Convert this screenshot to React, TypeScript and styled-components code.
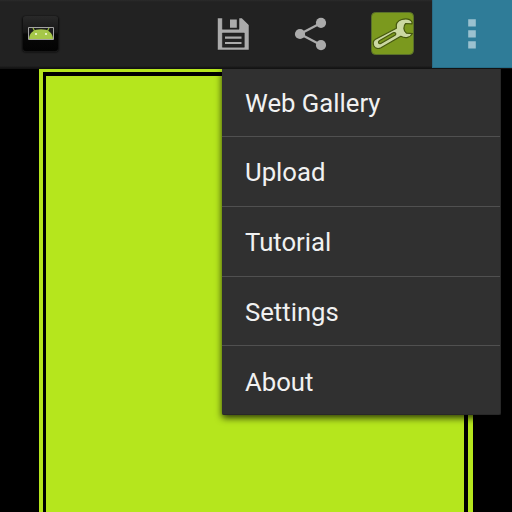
import React from 'react';
import styled, { createGlobalStyle } from 'styled-components';

const GlobalStyle = createGlobalStyle`
  body { margin: 0; background: #000; overflow: hidden; }
  *, *::before, *::after { box-sizing: border-box; }
`;

const Screen = styled.div`
  position: relative;
  display: flex;
  flex-direction: column;
  width: 512px;
  height: 512px;
  overflow: hidden;
  background: #000;
  font-family: Roboto, 'Liberation Sans', sans-serif;
`;

const ActionBar = styled.header`
  display: flex;
  flex: none;
  height: 69px;
  background: linear-gradient(#2b2b2b 0, #222 2px, #222 66px, #191919 67px, #111 69px);
`;

const HomeButton = styled.div`
  display: flex;
  width: 80px;
  padding: 14px 0 0 20px;
`;

const Actions = styled.nav`
  display: flex;
  margin-left: auto;
`;

const ActionButton = styled.button<{ $width: number; $active?: boolean }>`
  display: flex;
  align-items: center;
  justify-content: center;
  width: ${(p) => p.$width}px;
  height: ${(p) => (p.$active ? 68 : 67)}px;
  padding: ${(p) => (p.$active ? '0 2px 0 0' : '0')};
  border: 0;
  border-left: ${(p) => (p.$active ? '1px solid #2a6c86' : '0')};
  border-bottom: ${(p) => (p.$active ? '1px solid #256e89' : '0')};
  background: ${(p) => (p.$active ? '#2f7c98' : 'transparent')};
`;

const ToolsButton = styled(ActionButton)`
  margin-left: 3px;
`;

const Icon = styled.svg`
  display: block;
  flex: none;
  overflow: visible;
`;

const Canvas = styled.main`
  flex: 1;
  width: 434px;
  margin-left: 39px;
  padding: 3px 5px 0 4px;
  background: #b5e61d;
`;

const Frame = styled.div`
  height: 100%;
  border: solid #000;
  border-width: 4px 4px 0 3px;
  background: #b5e61d;
`;

const Menu = styled.ul`
  position: absolute;
  top: 69px;
  right: 11px;
  width: 279px;
  height: 346px;
  margin: 0;
  padding: 0;
  list-style: none;
  background: #303030;
  border: 0 solid #282828;
  border-width: 0 1px 1px 0;
  border-radius: 0 0 2px 2px;
  box-shadow: 0 3px 7px rgba(0, 0, 0, 0.75);
  clip-path: inset(0 -16px -20px -16px);
`;

const MenuItem = styled.li`
  display: flex;
  align-items: center;
  height: 69.75px;
  padding: 2px 23px 0;
  border-bottom: 1px solid #505050;
  color: #f1f1f1;
  font-size: 25.7px;
  line-height: 30px;
  white-space: nowrap;

  &:first-child { height: 68px; padding-top: 0; }
  &:last-child { border-bottom: 0; }
`;

function AppIcon() {
  return (
    <Icon width="40" height="40" viewBox="20 14 40 40">
      <defs>
        <linearGradient id="tile" x1="0" y1="0" x2="0" y2="1">
          <stop offset="0" stopColor="#292929" />
          <stop offset=".46" stopColor="#171717" />
          <stop offset=".52" stopColor="#080808" />
          <stop offset="1" stopColor="#030303" />
        </linearGradient>
        <filter id="tileShadow" x="-20%" y="-20%" width="140%" height="140%">
          <feGaussianBlur stdDeviation="1" />
        </filter>
      </defs>
      <rect x="22.5" y="16.5" width="36" height="35.5" rx="3" fill="#0b0b0b" filter="url(#tileShadow)" />
      <rect x="23" y="16" width="35" height="35" rx="3" fill="url(#tile)" />
      <path d="M28.5 39.5v-12h25v12z" fill="#1d1d1d" stroke="#a3a3a3" />
      <path d="M29 39C29.3 32.5 34 29.3 41 29.3s11.7 3.2 12 9.7z" fill="#a5c749" />
      <path d="m33 28 1.7 3.2m14.3-3.2-1.7 3.2" stroke="#9abe3d" strokeWidth="1.2" />
      <circle cx="36" cy="34" r="1.1" fill="#eff5d8" />
      <circle cx="46" cy="34" r="1.1" fill="#eff5d8" />
    </Icon>
  );
}

function SaveIcon() {
  return (
    <Icon width="34" height="34" viewBox="216 17 34 34">
      <path
        fillRule="evenodd"
        d="M217.5 18H222.4V29.2H239V18H241.8L249 25V50H217.5ZM222.4 33V47.2H244.3V33Z"
        fill="#ababab"
        stroke="#181818"
        strokeWidth=".5"
      />
      <path d="M230 19.5h6.8v8.2H230zM225 36.6h16.5v2.1H225zM225 42h16.5v2.1H225z" fill="#ababab" />
    </Icon>
  );
}

function ShareIcon() {
  return (
    <Icon width="34" height="36" viewBox="294 15.5 34 36">
      <path d="M321 22.5 300 33.5l21 11" fill="none" stroke="#ababab" strokeWidth="2.3" />
      <g fill="#ababab">
        <circle cx="300" cy="33.5" r="5.1" />
        <circle cx="321" cy="22.3" r="5.1" />
        <circle cx="321" cy="44.6" r="5.1" />
      </g>
    </Icon>
  );
}

function WrenchIcon() {
  return (
    <Icon width="43" height="43" viewBox="371 12 43 43">
      <rect x="371.5" y="12.5" width="42" height="42" rx="4" fill="#7b991e" stroke="#59702a" />
      <path
        d="M412 22C410 18.8 406 18.3 401.7 19.5C397.3 21 395.6 24.5 396.4 28.2L375.5 39.3C373 40.8 372.8 43.5 373.9 46C375.4 48.9 378.5 49 381 47.7L400.8 36.3C405.5 38.7 410.5 37.7 412.4 33.6L406.5 33.2C403.3 31 403 26.2 405.7 23.5L412 23.8Z"
        fill="#cbd8a2"
        stroke="#46580f"
        strokeWidth="1.2"
        strokeLinejoin="round"
      />
      <path
        d="M379.3 40.7 393.2 32.8C395.2 31.9 396.8 34 395 35.3L380.8 43.5C378.8 44.4 377.6 42 379.3 40.7Z"
        fill="#7b991e"
        stroke="#46580f"
        strokeWidth="1.2"
      />
    </Icon>
  );
}

function OverflowIcon() {
  return (
    <Icon width="8" height="30" viewBox="0 0 8 30">
      <path d="M.2.3h7.6v7.2H.2zM.2 11.2h7.6v7.2H.2zM.2 22.2h7.6v7.2H.2z" fill="#9bc1cf" />
    </Icon>
  );
}

const items = ['Web Gallery', 'Upload', 'Tutorial', 'Settings', 'About'];

export default function App() {
  return (
    <>
      <GlobalStyle />
      <Screen>
        <ActionBar>
          <HomeButton><AppIcon /></HomeButton>
          <Actions>
            <ActionButton $width={78} aria-label="Save"><SaveIcon /></ActionButton>
            <ActionButton $width={78} aria-label="Share"><ShareIcon /></ActionButton>
            <ToolsButton $width={79} aria-label="Tools"><WrenchIcon /></ToolsButton>
            <ActionButton $width={80} $active aria-label="More options"><OverflowIcon /></ActionButton>
          </Actions>
        </ActionBar>
        <Canvas><Frame /></Canvas>
        <Menu>
          {items.map((label) => <MenuItem key={label}>{label}</MenuItem>)}
        </Menu>
      </Screen>
    </>
  );
}
